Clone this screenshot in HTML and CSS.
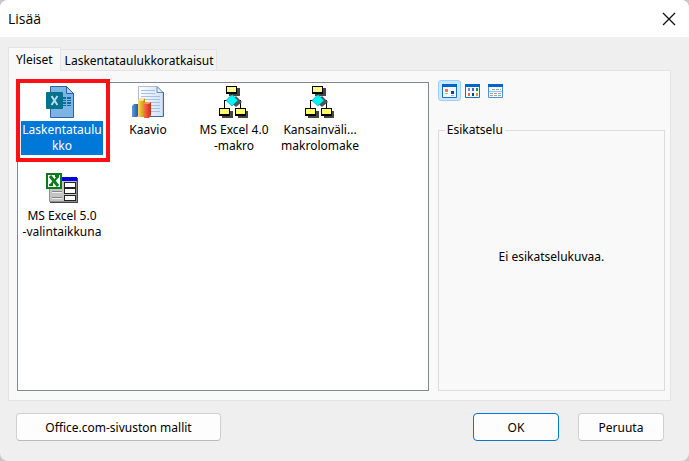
FILE: index.html
```
<!DOCTYPE html>
<html lang="fi">
<head>
    <meta charset="UTF-8">
    <meta name="viewport" content="width=device-width, initial-scale=1.0">
    <title>Lisää</title>
    <link rel="stylesheet" href="styles.css">
</head>
<body>
    <!-- Shared drawing for the two macro templates -->
    <svg class="defs" width="0" height="0" aria-hidden="true">
        <symbol id="macro-icon" viewBox="0 0 32 32">
            <g shape-rendering="crispEdges">
                <path fill="#444" d="M11 2h11v8H11zM4 25h11v7H4zM20 25h10v7H20z"/>
                <path fill="none" stroke="#000" d="M13.500 6v4M10 14.500H6.500V22M20 14.500h2.500V22"/>
                <path fill="#000" d="M8 0h11v8H8zM1 22h11v8H1zM17 22h11v8H17z"/>
                <path fill="#ffff66" d="M9 1h9v5H9zM2 23h9v5H2zM18 23h9v5h-9z"/>
                <path stroke="#ffffc8" stroke-dasharray="1 1" d="M10 2.500h7M10 4.500h7M3 24.500h7M3 26.500h7M19 24.500h7M19 26.500h7"/>
            </g>
            <path fill="#555" d="M18 10l6 6-6 5-6-5z"/>
            <path fill="#00f4f8" stroke="#008a8a" stroke-width=".6" d="M14 8.500l6 6-6 5.500-6-5.500z"/>
        </symbol>
    </svg>

    <div class="dialog">
        <header class="titlebar">
            <h1>Lisää</h1>
            <button type="button" class="close" aria-label="Sulje">
                <svg width="14" height="14" viewBox="0 0 14 14"><path d="M1 1l12 12M13 1L1 13" stroke="#111" stroke-width="1.300"/></svg>
            </button>
        </header>

        <div class="tabs" role="tablist">
            <button type="button" class="tab active" role="tab" aria-selected="true">Yleiset</button>
            <button type="button" class="tab" role="tab" aria-selected="false">Laskentataulukkoratkaisut</button>
        </div>

        <main class="panel">
            <ul class="templates">
                <li>
                    <button type="button" class="template selected">
                        <svg width="32" height="32" viewBox="0 0 32 32">
                            <path fill="#7db4e6" stroke="#2467a8" d="M4.500.5h16l7 7v24h-23z"/>
                            <path fill="#a8cdf0" stroke="#2467a8" d="M20.500.5v7h7z"/>
                            <path fill="#106c9a" d="M17 11h3v2h-3zM21 11h4v2h-4zM17 14h3v1h-3zM21 14h4v1h-4zM17 16h3v2h-3zM21 16h4v2h-4zM17 19h3v1h-3zM21 19h4v1h-4z"/>
                            <rect x="0" y="6" width="17" height="17" rx="1" fill="#02728f"/>
                            <path stroke="#b6dcf0" stroke-width="2" d="M5.500 10l6 9M11.500 10l-6 9"/>
                        </svg>
                        <span>Laskentataulu<br>kko</span>
                    </button>
                </li>
                <li>
                    <button type="button" class="template">
                        <svg width="32" height="32" viewBox="0 0 32 32">
                            <defs>
                                <linearGradient id="page"><stop offset="0" stop-color="#fff"/><stop offset="1" stop-color="#cfe0f6"/></linearGradient>
                                <linearGradient id="blue"><stop offset="0" stop-color="#5c9ade"/><stop offset="1" stop-color="#1c4f9c"/></linearGradient>
                                <linearGradient id="gold"><stop offset="0" stop-color="#fbd860"/><stop offset="1" stop-color="#c68a08"/></linearGradient>
                                <linearGradient id="red"><stop offset="0" stop-color="#fa7044"/><stop offset="1" stop-color="#c52c14"/></linearGradient>
                            </defs>
                            <path fill="url(#page)" stroke="#aebfd8" d="M6.500.5H25l6 6v24H6.500z"/>
                            <path fill="none" stroke="#45659c" d="M31.500 6v24.500H18"/>
                            <path fill="#e4edf9" stroke="#7089b0" d="M25 .5v6h6z"/>
                            <path stroke="#a5c0e6" d="M9 4.500h14M9 7.500h14M9 10.500h19M13 13.500h15M13 16.500h15M19 19.500h9M19 22.500h9M19 25.500h9"/>
                            <path fill="url(#blue)" d="M0 20l2-2h5v11l-2 2H0z"/>
                            <path fill="url(#gold)" d="M6 15l2-3h5v17l-2 2H6z"/>
                            <path fill="url(#red)" d="M12 18l2-2h5v13l-2 3h-5z"/>
                            <path fill="#ffe58c" d="M6 15l2-3h5l-2 3z"/>
                            <path fill="#ff9670" d="M12 18l2-2h5l-2 2z"/>
                        </svg>
                        <span>Kaavio</span>
                    </button>
                </li>
                <li>
                    <button type="button" class="template">
                        <svg width="32" height="32"><use href="#macro-icon"/></svg>
                        <span>MS Excel 4.0<br>-makro</span>
                    </button>
                </li>
                <li>
                    <button type="button" class="template">
                        <svg width="32" height="32"><use href="#macro-icon"/></svg>
                        <span>Kansainväli...<br>makrolomake</span>
                    </button>
                </li>
                <li>
                    <button type="button" class="template">
                        <svg width="32" height="32" viewBox="0 0 32 32">
                            <path fill="#444" d="M4 6h28v25H4z"/>
                            <path fill="#c4c4c4" stroke="#909090" d="M3.500 5.500h27v24h-27z"/>
                            <path fill="#0000d8" d="M15 5h16v4H15z"/>
                            <path fill="#222" d="M18 10h12v6H18zM18 16h12v6H18zM18 23h12v6H18z"/>
                            <path fill="#fff" d="M19 11h10v4H19zM19 17h10v4H19zM19 24h10v4H19z"/>
                            <path stroke="#858585" d="M6 19.500h10M6 25.500h10"/>
                            <path stroke="#eee" d="M6 20.500h10M6 26.500h10"/>
                            <path fill="#fff" stroke="#087c18" stroke-width="2" d="M1 2h14v14H1z"/>
                            <path stroke="#087c18" stroke-width="3" d="M4 4l8 10"/>
                            <path stroke="#087c18" stroke-width="2" d="M12.500 4L4 13.500M3 13h4M9 4h4"/>
                        </svg>
                        <span>MS Excel 5.0<br>-valintaikkuna</span>
                    </button>
                </li>
            </ul>

            <section class="side">
                <div class="views">
                    <button type="button" class="view selected" aria-label="Suuret kuvakkeet">
                        <svg width="15" height="14" viewBox="0 0 15 14">
                            <path fill="#f4f9fe" stroke="#1470c8" d="M.5.5h14v13H.5z"/>
                            <path fill="#0064c8" d="M0 0h15v3H0z"/>
                            <path fill="#f4764a" d="M3 5h3v3H3z"/>
                            <path fill="#12409c" d="M9 7h3v3H9z"/>
                            <path stroke="#b0b0b0" d="M3 9.500h3M9 11.500h3"/>
                        </svg>
                    </button>
                    <button type="button" class="view" aria-label="Luettelo">
                        <svg width="15" height="14" viewBox="0 0 15 14">
                            <path fill="#f4f9fe" stroke="#1470c8" d="M.5.5h14v13H.5z"/>
                            <path fill="#0064c8" d="M0 0h15v3H0z"/>
                            <path fill="#8b88b8" d="M3 4h2v3H3z"/>
                            <path fill="#3a6cd8" d="M7 4h2v3H7z"/>
                            <path fill="#0c9c2c" d="M11 4h2v3h-2z"/>
                            <path fill="#ee6838" d="M3 9h2v3H3z"/>
                            <path fill="#12409c" d="M7 9h2v3H7z"/>
                            <path fill="#d4a020" d="M11 9h2v3h-2z"/>
                        </svg>
                    </button>
                    <button type="button" class="view" aria-label="Tiedot">
                        <svg width="15" height="14" viewBox="0 0 15 14">
                            <path fill="#f4f9fe" stroke="#4a94dc" d="M.5.5h14v13H.5z"/>
                            <path fill="#0064c8" d="M0 0h15v3H0z"/>
                            <path fill="#8fc2f0" d="M1 7h13v1H1z"/>
                            <path stroke="#a0a0a0" stroke-dasharray="3 1" d="M4 5.500h9M2 9.500h11M2 11.500h11"/>
                        </svg>
                    </button>
                </div>
                <fieldset class="preview">
                    <legend>Esikatselu</legend>
                    <p>Ei esikatselukuvaa.</p>
                </fieldset>
            </section>
        </main>

        <footer class="actions">
            <button type="button" class="btn wide">Office.com-sivuston mallit</button>
            <button type="button" class="btn primary">OK</button>
            <button type="button" class="btn">Peruuta</button>
        </footer>
    </div>
</body>
</html>
```
FILE: styles.css
```
* {
    box-sizing: border-box;
}
body {
    margin: 0;
    background: #c8c8c8;
    color: #000;
    font-family: "Noto Sans", "Open Sans", sans-serif;
    font-size: 12px;
    line-height: 16px;
}
button {
    margin: 0;
    padding: 0;
    border: none;
    background: none;
    color: inherit;
    font: inherit;
}
svg {
    display: block;
}
.defs {
    position: absolute;
}
.dialog {
    display: flex;
    flex-direction: column;
    min-height: 100vh;
    background: #efefef;
    border-radius: 8px;
    overflow: hidden;
}
.titlebar {
    display: flex;
    align-items: center;
    justify-content: space-between;
    height: 37px;
    padding: 0 13px 0 8px;
    background: #fff;
}
.titlebar h1 {
    margin: 0;
    font-family: "Open Sans", "Noto Sans", sans-serif;
    font-size: 14px;
    font-weight: normal;
}

/* Tabs */
.tabs {
    display: flex;
    align-items: flex-end;
    margin: 10px 8px 0;
}
.tab {
    height: 21px;
    padding: 2px 2px 0 4px;
    border: 1px solid #e4e4e4;
    border-bottom: none;
    border-left: none;
    background: #f2f2f2;
}
.tab.active {
    height: 24px;
    margin-bottom: -1px;
    padding: 0 7px;
    border-left: 1px solid #e4e4e4;
    background: #f9f9f9;
    z-index: 1;
}
.panel {
    display: flex;
    flex: 1;
    gap: 9px;
    margin: 0 18px 0 8px;
    padding: 11px 5px 9px 8px;
    border: 1px solid #e4e4e4;
    background: #f9f9f9;
}

/* Template list */
.templates {
    display: grid;
    flex: 411;
    grid-template-columns: repeat(auto-fill, 86px);
    grid-auto-rows: 86px;
    margin: 0;
    padding: 3px 1px;
    border: 1px solid #828790;
    background: #fff;
    list-style: none;
}
.template {
    position: relative;
    display: flex;
    flex-direction: column;
    align-items: center;
    gap: 3px;
    width: 86px;
}
.template span {
    width: 82px;
    padding: 1px 0;
    white-space: nowrap;
}
.template.selected span {
    background: #0078d7;
    color: #fff;
}
.template.selected::after {
    content: "";
    position: absolute;
    inset: -7px -5px -7px -3px;
    border: 4px solid #fb1015;
}

/* Preview side */
.side {
    display: flex;
    flex: 229;
    flex-direction: column;
    gap: 21px;
    margin-top: -2px;
}
.views {
    display: flex;
}
.view {
    display: grid;
    place-items: center;
    width: 23px;
    height: 21px;
    border: 1px solid transparent;
    border-radius: 3px;
}
.view.selected {
    border-color: #99d1ff;
    background: #cce8ff;
}
.preview {
    display: flex;
    flex: 1;
    align-items: center;
    justify-content: center;
    margin: 0;
    padding: 0 0 14px;
    border: 1px solid #dcdcdc;
}
.preview legend {
    margin-left: 6px;
    padding: 0 2px;
}
.preview p {
    margin: 0;
}

/* Bottom buttons */
.actions {
    display: flex;
    gap: 19px;
    padding: 12px 25px 20px 16px;
}
.btn {
    width: 86px;
    height: 28px;
    padding-top: 1px;
    border: 1px solid #d0d0d0;
    border-bottom-color: #bababa;
    border-radius: 4px;
    background: #fdfdfd;
}
.btn.wide {
    width: 205px;
    margin-right: auto;
}
.btn.primary {
    border-color: #0078d4;
}
```
